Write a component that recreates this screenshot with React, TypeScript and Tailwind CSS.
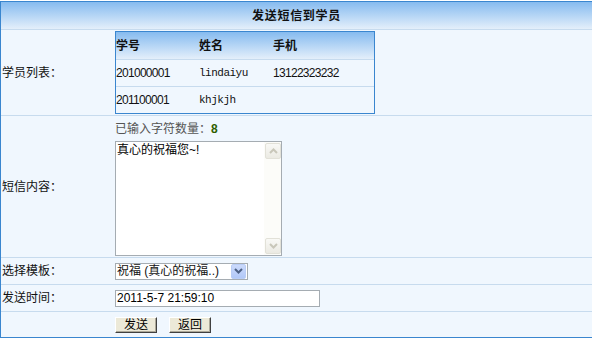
import type { ReactNode } from 'react'

type RowProps = {
  label: string
  height: string
  last?: boolean
  children: ReactNode
}

function Row({ label, height, last, children }: RowProps) {
  return (
    <div className={`flex ${height} ${last ? '' : 'border-b border-[#c7dbee]'}`}>
      <div className="flex w-[114px] shrink-0 items-center pl-[1px]">{label}</div>
      <div className="flex-1">{children}</div>
    </div>
  )
}

function ScrollButton({ up }: { up?: boolean }) {
  return (
    <div className="flex h-[16px] w-[16px] items-center justify-center rounded-[2px] border border-[#e2e1d8] bg-linear-to-b from-[#f9f9f6] to-[#ebeae3]">
      <svg width="9" height="6" viewBox="0 0 9 6">
        <path
          d={up ? 'M1 5 L4.5 1.5 L8 5' : 'M1 1 L4.5 4.5 L8 1'}
          fill="none"
          stroke="#c9c7ba"
          strokeWidth="2"
        />
      </svg>
    </div>
  )
}

export default function App() {
  const students = [
    { no: '201000001', name: 'lindaiyu', phone: '13122323232' },
    { no: '201100001', name: 'khjkjh', phone: '' },
  ]

  return (
    <div className="h-[339px] w-[592px] overflow-hidden bg-white pt-[1px] font-['Liberation_Sans','Noto_Sans_CJK_SC',sans-serif] text-[12px] leading-[14px] text-[#111]">
      <div className="border-t border-b border-l border-[#3a86cf] bg-[#f0f7fe]">
        {/* title */}
        <div className="flex h-[28px] items-center justify-center border-b border-[#c7dbee] bg-linear-to-b from-[#86bbef] to-[#e4effa] font-bold tracking-[0.7px]">
          发送短信到学员
        </div>

        <Row label="学员列表：" height="h-[86px]">
          <div className="pt-[1px]">
            <div className="w-[260px] border border-[#3a86cf]">
              <div className="grid h-[28px] grid-cols-[83px_74px_1fr] items-center border-b border-[#c7dbee] bg-linear-to-b from-[#86bbef] to-[#e4effa] font-bold">
                <span>学号</span>
                <span>姓名</span>
                <span>手机</span>
              </div>
              {students.map((s, i) => (
                <div
                  key={s.no}
                  className={`grid grid-cols-[83px_74px_1fr] items-center ${
                    i === 0 ? 'h-[27px] border-b border-[#c7dbee]' : 'h-[26px]'
                  }`}
                >
                  <span className="tracking-[-0.7px]">{s.no}</span>
                  <span className="font-['Liberation_Mono',monospace] text-[11px] tracking-[-0.5px]">{s.name}</span>
                  <span className="tracking-[-0.7px]">{s.phone}</span>
                </div>
              ))}
            </div>
          </div>
        </Row>

        <Row label="短信内容：" height="h-[142px]">
          <div className="flex h-[25px] items-center text-[#555]">
            已输入字符数量：<b className="text-[#2f5e00]">8</b>
          </div>
          <div className="flex h-[115px] w-[167px] border border-[#a5acb2] bg-white">
            <textarea
              readOnly
              value="真心的祝福您~!"
              className="flex-1 resize-none overflow-hidden px-[1px] pt-[1px] text-[12px] leading-[14px] text-black outline-none"
            />
            <div className="flex w-[17px] flex-col justify-between bg-[#fcfcf9] p-[1px] pr-0">
              <ScrollButton up />
              <ScrollButton />
            </div>
          </div>
        </Row>

        <Row label="选择模板：" height="h-[27px]">
          <div className="flex h-full items-center">
            <div className="flex h-[17px] w-[133px] items-center border border-[#a5acb2] bg-white">
              <span className="flex-1 pl-[1px] whitespace-nowrap">祝福 (真心的祝福..)</span>
              <div className="mr-[1px] flex h-[15px] w-[15px] items-center justify-center rounded-[2px] border border-[#b9cdf6] bg-linear-to-b from-[#cbdafc] to-[#b1c8f8]">
                <svg width="9" height="6" viewBox="0 0 9 6">
                  <path d="M1 1 L4.5 4.5 L8 1" fill="none" stroke="#4d6185" strokeWidth="2" />
                </svg>
              </div>
            </div>
          </div>
        </Row>

        <Row label="发送时间：" height="h-[27px]">
          <div className="flex h-full items-center">
            <input
              readOnly
              value="2011-5-7 21:59:10"
              className="h-[17px] w-[205px] border border-[#a5acb2] bg-white px-[1px] text-[12px] leading-[14px] text-black outline-none"
            />
          </div>
        </Row>

        <Row label="" height="h-[25px]" last>
          <div className="flex h-full items-center gap-[12px]">
            {['发送', '返回'].map((t) => (
              <button
                key={t}
                className="flex h-[16px] w-[42px] items-center justify-center border border-t-white border-l-white border-r-[#404040] border-b-[#404040] bg-[#ece9d8] shadow-[inset_-1px_-1px_0_#aca899] text-[12px] leading-[14px] text-black"
              >
                {t}
              </button>
            ))}
          </div>
        </Row>
      </div>
    </div>
  )
}
